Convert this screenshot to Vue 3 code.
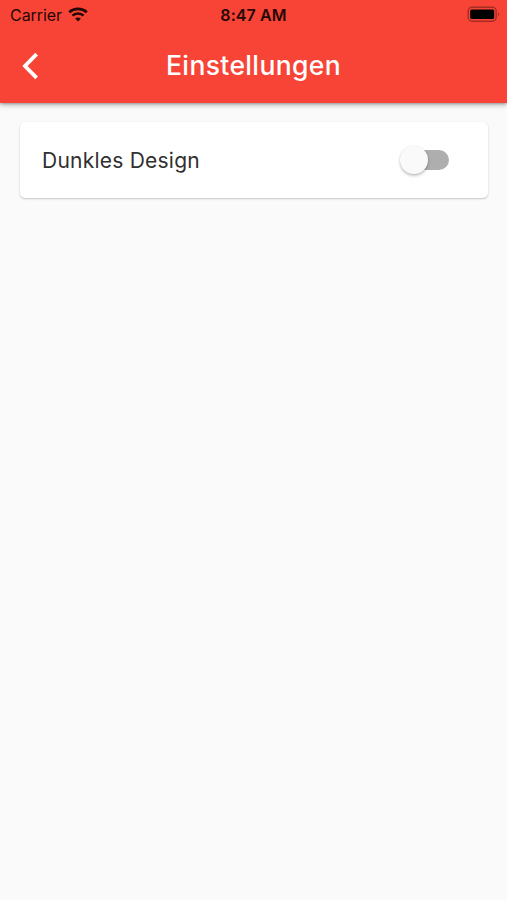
<script setup>
import { ref } from 'vue'

const darkMode = ref(false)
</script>

<template>
  <div class="screen">
    <header class="header">
      <div class="status">
        <div class="status-left">
          <span class="carrier">Carrier</span>
          <svg class="wifi" width="20" height="15" viewBox="0 0 20 15" fill="none" stroke="#240806">
            <path d="M1.2 5.2C6.1 .7 13.9 .7 18.8 5.2" stroke-width="2.8" />
            <path d="M4.4 8.7C7.5 5.7 12.5 5.7 15.6 8.7" stroke-width="2.5" />
            <path d="M7.1 11.6C8.7 10.1 11.3 10.1 12.9 11.6L10 14.4Z" fill="#240806" stroke="none" />
          </svg>
        </div>
        <span class="time">8:47 AM</span>
        <div class="status-right">
          <svg width="33" height="17" viewBox="0 0 33 17">
            <rect x="1.2" y="1.2" width="28" height="14" rx="4" fill="none" stroke="#a52d24" stroke-width="1.4" />
            <rect x="3.2" y="3.4" width="24" height="9.7" rx="1.5" fill="#000" />
            <path d="M31 6.2Q33.3 8.2 31 10.3Z" fill="#a52d24" />
          </svg>
        </div>
      </div>
      <div class="bar">
        <button class="back" aria-label="Zurück">
          <svg width="18" height="28" viewBox="0 0 18 28" fill="none" stroke="#fff" stroke-width="3.8">
            <path d="M15.6 2.2L4 14L15.6 25.8" />
          </svg>
        </button>
        <h1 class="title">Einstellungen</h1>
        <span></span>
      </div>
    </header>
    <main class="content">
      <section class="card">
        <span class="label">Dunkles Design</span>
        <button class="switch" :class="{ on: darkMode }" role="switch" :aria-checked="darkMode" @click="darkMode = !darkMode">
          <span class="thumb"></span>
        </button>
      </section>
    </main>
  </div>
</template>

<style>
body { background: #fafafa; }
</style>

<style scoped>
.screen {
  min-height: 900px;
  background: #fafafa;
  font-family: Inter, "Liberation Sans", sans-serif;
}
button { border: 0; padding: 0; background: none; }
.header {
  height: 103px;
  background: #f74436;
  box-shadow: 0 2px 5px rgba(0, 0, 0, .28), 0 1px 2px rgba(0, 0, 0, .18);
}
.status {
  display: grid;
  grid-template-columns: 1fr auto 1fr;
  align-items: center;
  height: 29px;
  padding: 0 8px 0 10px;
  color: #240806;
  font-size: 16px;
  line-height: 29px;
}
.status-left { display: flex; align-items: center; gap: 6px; margin-right: 3px; }
.carrier { letter-spacing: -.05px; }
.time { margin-left: -2px; font-weight: 600; letter-spacing: .1px; }
.carrier, .time { padding-top: 1px; line-height: 28px; }
.status-right { display: flex; justify-content: flex-end; margin-right: -1px; }
.bar {
  display: grid;
  grid-template-columns: 1fr auto 1fr;
  align-items: center;
  height: 74px;
  padding: 0 21px;
}
.back { display: flex; }
.title {
  margin: 0;
  padding-bottom: 2px;
  color: #fff;
  font-size: 26.5px;
  line-height: 34px;
  font-weight: 500;
  letter-spacing: .35px;
}
.content { padding: 19px 19px 0 20px; }
.card {
  display: flex;
  align-items: center;
  justify-content: space-between;
  height: 76px;
  padding: 0 39px 0 22px;
  border-radius: 5px;
  background: #fff;
  box-shadow: 0 1px 2px rgba(0, 0, 0, .22), 0 0 1px rgba(0, 0, 0, .06);
}
.label { padding-top: 2px; color: #303030; font-size: 21px; line-height: 28px; letter-spacing: .23px; }
.switch {
  display: flex;
  align-items: center;
  width: 45px;
  height: 20px;
  border-radius: 10px;
  background: #aeaeae;
}
.thumb {
  width: 28px;
  height: 28px;
  margin-left: -4px;
  flex: none;
  border-radius: 50%;
  background: #fafafa;
  box-shadow: 0 2px 3px rgba(0, 0, 0, .22), 0 0 2px rgba(0, 0, 0, .1);
}
.switch.on { justify-content: flex-end; background: #f9a19a; }
.switch.on .thumb { background: #f74436; }
</style>
